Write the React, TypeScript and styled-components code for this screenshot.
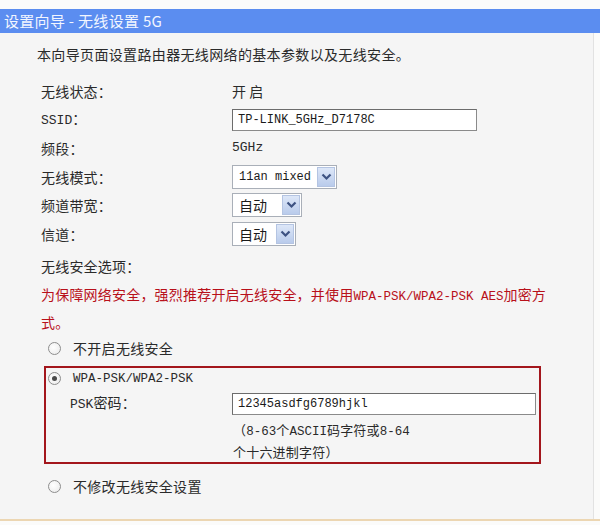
import React from "react";
import styled, { createGlobalStyle } from "styled-components";

const Global = createGlobalStyle`
  html, body { margin: 0; padding: 0; background: #fbfbfa; }
  body {
    font-family: "Noto Sans CJK SC", "Noto Sans", sans-serif;
    color: #2a2a2a;
  }
  * { box-sizing: border-box; }
`;

const Page = styled.div`
  width: 600px;
  height: 525px;
  display: flex;
  flex-direction: column;
  overflow: hidden;
`;

const TopStrip = styled.div`
  height: 9px;
  background: #fbfbfb;
`;

const TitleBar = styled.div`
  height: 24px;
  background: #5b8df0;
  color: #f2f6ff;
  font-size: 15px;
  line-height: 24px;
  padding-left: 4px;
  letter-spacing: 0.3px;
  white-space: pre;
`;

const Body = styled.div`
  height: 488px;
  border-bottom: 2px solid #ecd6b2;
  display: flex;
`;

const Panel = styled.div`
  width: 594px;
  background: #f5f5f5;
  border-right: 1px solid #e2e2e2;
  padding: 11px 0 0 41px;
  display: flex;
  flex-direction: column;
`;

const Intro = styled.div`
  margin-left: -4px;
  font-size: 14px;
  line-height: 20px;
  letter-spacing: 0.35px;
`;

const FormGrid = styled.div`
  margin-top: 13px;
  display: grid;
  grid-template-columns: 191px auto;
  grid-auto-rows: 28.5px;
  align-items: center;
`;

const Label = styled.div`
  font-size: 14px;
  line-height: 20px;
  letter-spacing: 0.2px;
`;

const Value = styled.div`
  font-size: 14px;
  line-height: 20px;
  display: flex;
  align-items: center;
`;

const Latin = styled.span<{ $size?: number }>`
  font-family: "Liberation Mono", monospace;
  font-size: ${(p) => p.$size ?? 12}px;
  letter-spacing: 0;
`;

const TextInput = styled.div<{ $w: number }>`
  width: ${(p) => p.$w}px;
  height: 22px;
  background: #fff;
  border: 1px solid #8a8a8a;
  border-top-color: #6c6c6c;
  border-left-color: #6c6c6c;
  font-family: "Liberation Mono", monospace;
  font-size: 12px;
  line-height: 20px;
  padding-left: 5px;
  color: #1a1a1a;
`;

const SelectBox = styled.div<{ $w: number }>`
  width: ${(p) => p.$w}px;
  height: 24px;
  background: #fff;
  border: 1px solid #a9afb8;
  display: flex;
  align-items: stretch;
  justify-content: space-between;
`;

const SelectText = styled.div<{ $mono?: boolean }>`
  padding-left: 6px;
  font-family: ${(p) =>
    p.$mono ? `"Liberation Mono", monospace` : `"Noto Sans CJK SC", sans-serif`};
  font-size: ${(p) => (p.$mono ? 12 : 14)}px;
  line-height: 22px;
  color: #1a1a1a;
  white-space: nowrap;
`;

const ArrowBtn = styled.div`
  width: 18px;
  margin: 1px;
  background: linear-gradient(#dde7f8, #b9cbeb);
  border: 1px solid #b4c4e2;
  display: flex;
  align-items: center;
  justify-content: center;
`;

const SectionTitle = styled.div`
  margin-top: 7px;
  font-size: 14px;
  line-height: 22px;
  letter-spacing: 0.2px;
`;

const Warning = styled.div`
  margin-top: 5px;
  color: #b8101a;
  font-size: 14px;
  line-height: 25px;
  letter-spacing: 0.2px;
  font-weight: 400;
`;

const RadioRow = styled.div<{ $h: number }>`
  height: ${(p) => p.$h}px;
  display: flex;
  align-items: center;
  gap: 12px;
  font-size: 14px;
  line-height: 20px;
  letter-spacing: 0.3px;
`;

const RadioDot = styled.span<{ $on?: boolean }>`
  width: 13px;
  height: 13px;
  flex: none;
  border-radius: 50%;
  border: 1px solid #8d8d8d;
  background: radial-gradient(circle at 40% 40%, #ffffff, #e9e9e9);
  display: flex;
  align-items: center;
  justify-content: center;
  &::after {
    content: "";
    width: 5px;
    height: 5px;
    border-radius: 50%;
    background: ${(p) => (p.$on ? "#4a4a4a" : "transparent")};
  }
`;

const OuterRadio = styled(RadioRow)`
  margin-left: 7px;
`;

const SecurityBox = styled.div`
  margin-top: 5px;
  margin-left: 3px;
  width: 497px;
  height: 98px;
  border: 2px solid #a3161c;
  padding: 0 0 0 2px;
  display: flex;
  flex-direction: column;
`;

const InnerGrid = styled.div`
  margin-top: 3px;
  display: grid;
  grid-template-columns: 162px auto;
  align-items: center;
  padding-left: 22px;
  height: 26px;
`;

const Hint = styled.div`
  margin-top: 5px;
  padding-left: 185px;
  font-size: 13px;
  line-height: 20px;
  color: #2a2a2a;
  letter-spacing: 0.2px;
`;

const Chevron = () => (
  <svg width="11" height="8" viewBox="0 0 11 8">
    <path d="M1.5 1.5 L5.5 5.5 L9.5 1.5" fill="none" stroke="#3d5282" strokeWidth="2.2" />
  </svg>
);

const Select = ({ w, text, mono }: { w: number; text: string; mono?: boolean }) => (
  <SelectBox $w={w}>
    <SelectText $mono={mono}>{text}</SelectText>
    <ArrowBtn>
      <Chevron />
    </ArrowBtn>
  </SelectBox>
);

export default function App() {
  return (
    <>
      <Global />
      <Page>
        <TopStrip />
        <TitleBar>设置向导 - 无线设置 5G</TitleBar>
        <Body>
          <Panel>
            <Intro>本向导页面设置路由器无线网络的基本参数以及无线安全。</Intro>
            <FormGrid>
              <Label>无线状态：</Label>
              <Value>开 启</Value>
              <Label>
                <Latin $size={13}>SSID</Latin>：
              </Label>
              <Value>
                <TextInput $w={245}>TP-LINK_5GHz_D7178C</TextInput>
              </Value>
              <Label>频段：</Label>
              <Value>
                <Latin $size={13}>5GHz</Latin>
              </Value>
              <Label>无线模式：</Label>
              <Value>
                <Select w={105} text="11an mixed" mono />
              </Value>
              <Label>频道带宽：</Label>
              <Value>
                <Select w={70} text="自动" />
              </Value>
              <Label>信道：</Label>
              <Value>
                <Select w={64} text="自动" />
              </Value>
            </FormGrid>
            <SectionTitle>无线安全选项：</SectionTitle>
            <Warning>
              为保障网络安全，强烈推荐开启无线安全，并使用
              <Latin $size={12.5}>WPA-PSK/WPA2-PSK AES</Latin>加密方
              <br />
              式。
            </Warning>
            <OuterRadio $h={26}>
              <RadioDot />
              不开启无线安全
            </OuterRadio>
            <SecurityBox>
              <RadioRow $h={26}>
                <RadioDot $on />
                <Latin $size={12.5}>WPA-PSK/WPA2-PSK</Latin>
              </RadioRow>
              <InnerGrid>
                <Label>
                  <Latin $size={13}>PSK</Latin>密码：
                </Label>
                <TextInput $w={304}>12345asdfg6789hjkl</TextInput>
              </InnerGrid>
              <Hint>
                （<Latin $size={12.5}>8-63</Latin>个<Latin $size={12.5}>ASCII</Latin>码字符或
                <Latin $size={12.5}>8-64</Latin>
                <br />
                个十六进制字符）
              </Hint>
            </SecurityBox>
            <OuterRadio $h={44}>
              <RadioDot />
              不修改无线安全设置
            </OuterRadio>
          </Panel>
        </Body>
      </Page>
    </>
  );
}
